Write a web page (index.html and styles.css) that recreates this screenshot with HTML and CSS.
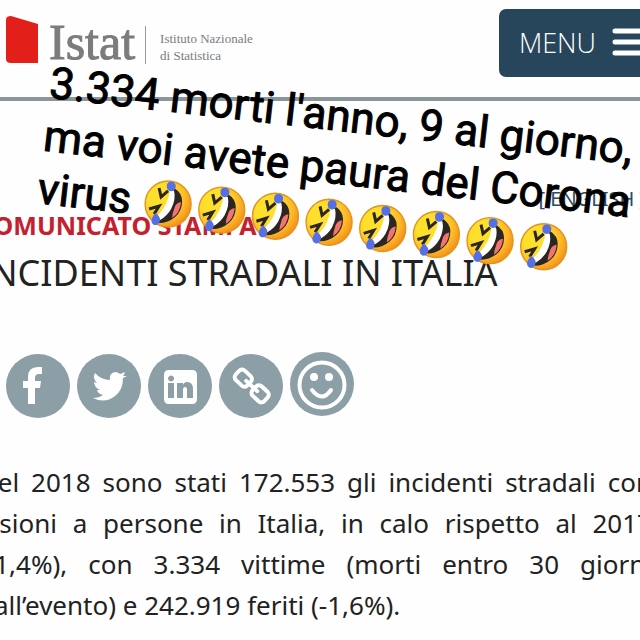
FILE: index.html
```
<!DOCTYPE html>
<html lang="it">
<head>
<meta charset="utf-8">
<meta name="viewport" content="width=device-width, initial-scale=1">
<title>Incidenti stradali in Italia</title>
<link rel="stylesheet" href="styles.css">
</head>
<body>
<svg class="defs" aria-hidden="true">
  <defs>
    <radialGradient id="face" cx="0.35" cy="0.35" r="0.7">
      <stop offset="0.4" stop-color="#fddf2c"/>
      <stop offset="0.75" stop-color="#fcb928"/>
      <stop offset="1" stop-color="#f58f1b"/>
    </radialGradient>
    <symbol id="rofl" viewBox="0 0 54 54">
      <g transform="rotate(-6.5 27 27)">
        <circle cx="27" cy="27" r="23" fill="url(#face)" stroke="#e0951f" stroke-width="1.4"/>
        <path d="M33 11Q41 16 41 24Q41 34 34 40Q27 46 18 46L17 40Q28 30 33 11Z" fill="#2b2523"/>
        <path d="M29 12L33 14Q35 22 30 32Q26 39 19 43L16 39Q27 29 29 12Z" fill="#fff"/>
        <path d="M40 25Q34 26 33 32Q31 37 31 41Q39 36 40 25Z" fill="#f4736f"/>
        <path d="M18 11L20 20L27 14M8 32L18 29L13 37" fill="none" stroke="#2b2523" stroke-width="3" stroke-linejoin="miter"/>
        <path d="M26 7Q27 4 32 5Q36 7 34 12Q31 16 27 13Q25 11 26 7Z" fill="#5570e6"/>
        <path d="M14 36Q19 39 19 43Q18 49 13 48Q9 46 11 41Z" fill="#5570e6"/>
      </g>
    </symbol>
  </defs>
</svg>

<header class="site-header">
  <a class="brand" href="#">
    <svg class="brand-mark" viewBox="0 0 32 48" aria-hidden="true"><path d="M0 4Q0 0 5 0L32 8V47H5Q0 47 0 43Z" fill="#e31f1a"/></svg>
    <span class="brand-name">Istat</span>
    <span class="brand-sub">Istituto Nazionale<br>di Statistica</span>
  </a>
  <button class="menu" type="button">MENU
    <svg class="menu-bars" viewBox="0 0 40 28" aria-hidden="true"><path d="M3 3H40M3 14H40M3 25H40" stroke="#fff" stroke-width="5" stroke-linecap="round"/></svg>
  </button>
</header>

<main class="page">
  <a class="lang" href="#">[ ENGLISH ]</a>
  <p class="kicker">COMUNICATO STAMPA</p>
  <h1 class="title">INCIDENTI STRADALI IN ITALIA</h1>

  <nav class="share" aria-label="Condividi">
    <a href="#" aria-label="Facebook"><svg viewBox="0 0 64 64"><path d="M22 50V34H17V27H22V23Q22 13 32 13H36V20H33Q29 20 29 24V27H35L34 34H29V50Z"/></svg></a>
    <a href="#" aria-label="Twitter"><svg viewBox="0 0 64 64"><path d="M50 22Q48 23 46 24Q46 36 38 42Q28 50 16 44Q22 44 26 41Q21 40 20 36Q22 36 23 36Q17 33 17 28Q19 29 20 29Q15 24 18 19Q24 26 33 26Q32 19 38 18Q41 18 43 20Q46 19 48 18Q47 21 46 22Q48 22 50 22Z"/></svg></a>
    <a href="#" aria-label="LinkedIn"><svg viewBox="0 0 64 64"><path fill-rule="evenodd" d="M21 16H44Q49 16 49 21V45Q49 50 44 50H21Q16 50 16 45V21Q16 16 21 16ZM20 29V44H26V29ZM23 21.500A3 3 0 1 0 23.100 21.500ZM29 29V44H35V36Q35 33 37 33Q39 33 39 36V44H45V35Q45 28 39 28Q36 28 35 31V29Z"/></svg></a>
    <a href="#" aria-label="Copia link"><svg viewBox="0 0 64 64"><g class="line" transform="rotate(43 32 32)"><rect x="13" y="25" width="16" height="13" rx="4"/><rect x="36" y="25" width="16" height="13" rx="4"/><path d="M25 31.500H40"/></g></svg></a>
    <a class="smile" href="#" aria-label="Feedback"><svg viewBox="0 0 64 64"><g class="line"><circle cx="32" cy="33" r="22.500"/><path d="M22 38Q32 51 41 38"/></g><circle cx="24" cy="25" r="4"/><circle cx="39" cy="25" r="4"/></svg></a>
  </nav>

  <p class="body-text">
    <span class="row">Nel 2018 sono stati 172.553 gli incidenti stradali con</span>
    <span class="row">lesioni a persone in Italia, in calo rispetto al 2017</span>
    <span class="row">(-1,4%), con 3.334 vittime (morti entro 30 giorni</span>
    <span class="last">dall’evento) e 242.919 feriti (-1,6%).</span>
  </p>
</main>

<div class="caption">
  <div>3.334 morti l'anno, 9 al giorno,</div>
  <div>ma voi avete paura del Corona</div>
  <div class="caption-end">virus <span class="faces" role="img" aria-label="Risate"><svg><use href="#rofl"/></svg><svg><use href="#rofl"/></svg><svg><use href="#rofl"/></svg><svg><use href="#rofl"/></svg><svg><use href="#rofl"/></svg><svg><use href="#rofl"/></svg><svg><use href="#rofl"/></svg><svg><use href="#rofl"/></svg></span></div>
</div>
</body>
</html>
```
FILE: styles.css
```
* { box-sizing: border-box; }
body {
  position: relative;
  margin: 0;
  overflow-x: hidden;
  background: #fefefe;
  color: #222;
  font-family: "Noto Sans", sans-serif;
}
a { color: inherit; text-decoration: none; }
.defs { position: absolute; width: 0; height: 0; }

.site-header {
  display: flex;
  justify-content: space-between;
  align-items: flex-start;
  height: 101px;
  padding: 9px 0 0 6px;
  border-bottom: 4px solid #8b969b;
}
.brand {
  display: flex;
  align-items: flex-end;
  padding-top: 7px;
  color: #7c7c7c;
  font-family: "Liberation Serif", serif;
}
.brand-mark { width: 32px; height: 48px; }
.brand-name {
  margin-left: 11px;
  font-size: 50px;
  line-height: 44px;
  -webkit-text-stroke: 1px #7c7c7c;
}
.brand-sub {
  margin-left: 10px;
  padding: 4px 0 0 14px;
  border-left: 1px solid #999;
  font-size: 13px;
  line-height: 17px;
}
.menu {
  display: flex;
  align-items: center;
  gap: 16px;
  height: 68px;
  margin-right: -12px;
  padding: 0 0 2px 20px;
  border: 0;
  border-radius: 7px;
  background: #27465b;
  color: #fff;
  font: 300 27px "Open Sans", sans-serif;
}
.menu-bars { width: 40px; height: 28px; }

.page { display: flow-root; }
.lang {
  display: block;
  margin: 84px -6px 0 0;
  color: #2d4c5e;
  font-size: 20px;
  line-height: 28px;
  text-align: right;
}
.kicker {
  margin: -6px 0 0 -22px;
  color: #c4212f;
  font-size: 25px;
  font-weight: 700;
  line-height: 36px;
  white-space: nowrap;
}
.title {
  margin: 4px 0 0 -22px;
  font-size: 36px;
  font-weight: 400;
  line-height: 52px;
  white-space: nowrap;
}
.share { display: flex; gap: 7px; margin: 55px 0 0 6px; }
.share a { width: 64px; height: 64px; border-radius: 50%; background: #8c9fa7; }
.share .smile { margin-top: -2px; }
.share svg { display: block; fill: #fff; }
.share .line { fill: none; stroke: #fff; stroke-width: 4; stroke-linecap: round; }

.body-text {
  margin: 44px -12px 0 -22px;
  font-size: 26px;
  line-height: 41px;
  white-space: nowrap;
}
.row, .last { display: block; }
.row { text-align: justify; text-align-last: justify; }

.caption {
  position: absolute;
  top: 57px;
  left: 53px;
  color: #000;
  font: 400 44px/53px Roboto, sans-serif;
  -webkit-text-stroke: 1px #000;
  white-space: nowrap;
  transform: rotate(6.5deg);
  transform-origin: 0 0;
}
.caption-end { display: flex; gap: 10px; }
.faces { display: flex; }
.faces svg { width: 54px; height: 54px; }
```
